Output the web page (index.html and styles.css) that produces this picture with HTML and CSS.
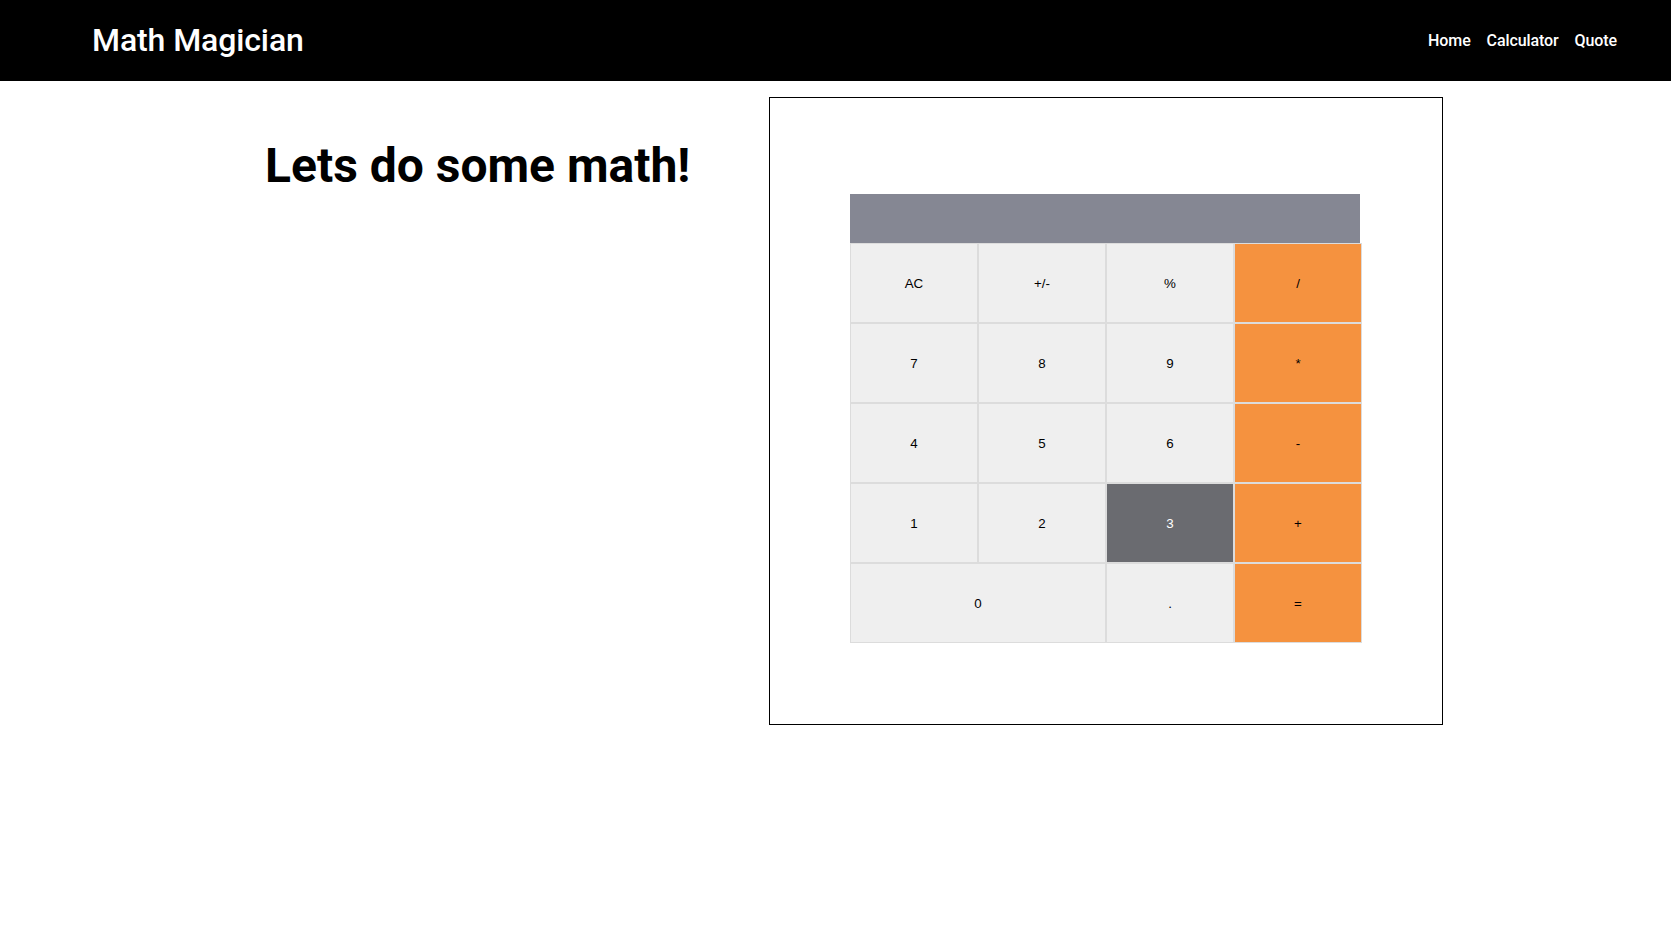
FILE: index.html
```html
<!DOCTYPE html>
<html lang="en">
<head>
<meta charset="utf-8">
<title>Math Magician</title>
<link rel="stylesheet" href="styles.css">
</head>
<body>
<header class="topbar">
  <div class="brand">Math Magician</div>
  <nav class="nav">
    <a href="#" class="nav-link">Home</a>
    <a href="#" class="nav-link">Calculator</a>
    <a href="#" class="nav-link">Quote</a>
  </nav>
</header>
<main class="page">
  <section class="intro">
    <h1 class="headline">Lets do some math!</h1>
  </section>
  <section class="calc-box">
    <div class="calculator">
      <div class="display"></div>
      <div class="keys">
        <button class="key">AC</button>
        <button class="key">+/-</button>
        <button class="key">%</button>
        <button class="key op">/</button>
        <button class="key">7</button>
        <button class="key">8</button>
        <button class="key">9</button>
        <button class="key op">*</button>
        <button class="key">4</button>
        <button class="key">5</button>
        <button class="key">6</button>
        <button class="key op">-</button>
        <button class="key">1</button>
        <button class="key">2</button>
        <button class="key active">3</button>
        <button class="key op">+</button>
        <button class="key wide">0</button>
        <button class="key">.</button>
        <button class="key op">=</button>
      </div>
    </div>
  </section>
</main>
</body>
</html>
```

FILE: styles.css
```css
* { box-sizing: border-box; }
html, body { margin: 0; padding: 0; }
body {
  font-family: Roboto, "Liberation Sans", Arial, sans-serif;
  background: #fff;
  color: #000;
}
.topbar {
  height: 81px;
  background: #000;
  display: flex;
  align-items: center;
  justify-content: space-between;
  padding: 0 54px 0 92px;
}
.brand {
  color: #fff;
  font-size: 32px;
  font-weight: 500;
  letter-spacing: -0.1px;
  margin-top: -1px;
}
.nav {
  display: flex;
  gap: 16px;
}
.nav-link {
  color: #fff;
  text-decoration: none;
  font-size: 16px;
  font-weight: 500;
  letter-spacing: -0.1px;
}
.page {
  display: flex;
  align-items: flex-start;
  padding: 16px 0 0 265px;
}
.intro {
  width: 504px;
  flex: 0 0 auto;
}
.headline {
  margin: 40px 0 0;
  font-size: 48px;
  font-weight: 700;
  line-height: normal;
}
.calc-box {
  border: 1px solid #000;
  padding: 96px 80px 81px 80px;
  flex: 0 0 auto;
}
.calculator {
  width: 512px;
}
.display {
  width: 510px;
  height: 49px;
  background: #858793;
}
.keys {
  display: grid;
  grid-template-columns: repeat(4, 128px);
  grid-auto-rows: 80px;
}
.key {
  font-family: "Liberation Sans", Arial, sans-serif;
  font-size: 13.333px;
  color: #000;
  background: #efefef;
  border: 1px solid #dcdcdc;
  margin: 0;
  padding: 0;
}
.key.op { background: #f5923f; }
.key.active { background: #6a6b70; color: #fff; }
.key.wide { grid-column: span 2; }
```
